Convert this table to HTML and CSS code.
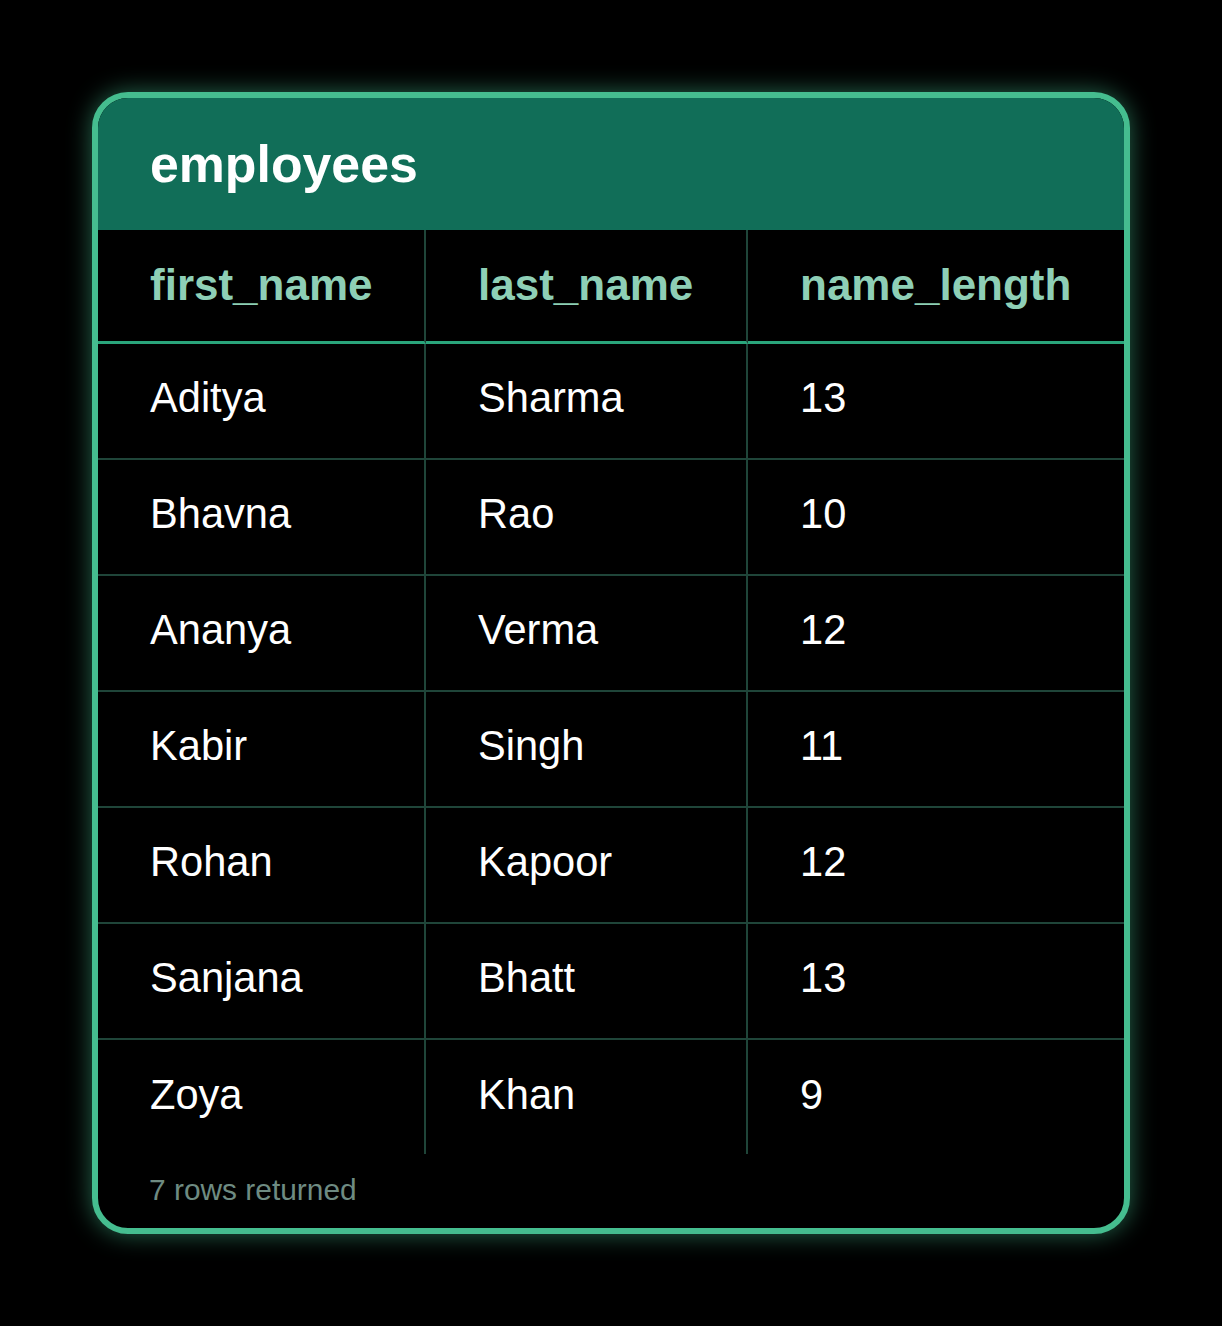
FILE: index.html
```html
<!DOCTYPE html>
<html lang="en">
<head>
<meta charset="utf-8">
<title>employees</title>
<link rel="stylesheet" href="styles.css">
</head>
<body>
<div class="card">
  <div class="card-title">employees</div>
  <div class="grid">
    <div class="cell head">first_name</div>
    <div class="cell head">last_name</div>
    <div class="cell head last-col">name_length</div>

    <div class="cell">Aditya</div>
    <div class="cell">Sharma</div>
    <div class="cell last-col">13</div>

    <div class="cell">Bhavna</div>
    <div class="cell">Rao</div>
    <div class="cell last-col">10</div>

    <div class="cell">Ananya</div>
    <div class="cell">Verma</div>
    <div class="cell last-col">12</div>

    <div class="cell">Kabir</div>
    <div class="cell">Singh</div>
    <div class="cell last-col">11</div>

    <div class="cell">Rohan</div>
    <div class="cell">Kapoor</div>
    <div class="cell last-col">12</div>

    <div class="cell">Sanjana</div>
    <div class="cell">Bhatt</div>
    <div class="cell last-col">13</div>

    <div class="cell last-row">Zoya</div>
    <div class="cell last-row">Khan</div>
    <div class="cell last-row last-col">9</div>
  </div>
  <div class="footer">7 rows returned</div>
</div>
</body>
</html>
```

FILE: styles.css
```css
* { box-sizing: border-box; }

html, body {
  margin: 0;
  background: #000;
}

body {
  padding: 92px;
  font-family: "Liberation Sans", Arial, sans-serif;
  color: #fff;
}

.card {
  width: 1038px;
  border: 6px solid #45bd8f;
  border-radius: 36px;
  background: #000;
  overflow: hidden;
  box-shadow: 0 0 24px rgba(69, 189, 143, 0.55);
}

.card-title {
  height: 132px;
  background: #116e58;
  display: flex;
  align-items: center;
  padding-left: 52px;
  font-size: 51.8px;
  font-weight: 700;
  color: #fff;
}

.grid {
  display: grid;
  grid-template-columns: 328px 322px 376px;
}

.cell {
  height: 116px;
  display: flex;
  align-items: center;
  padding-left: 52px;
  padding-bottom: 6px;
  font-size: 41.6px;
  color: #fff;
  border-right: 2px solid #1f4539;
  border-bottom: 2px solid #1f4539;
}

.cell.head {
  height: 114px;
  padding-bottom: 2px;
  font-size: 44px;
  font-weight: 700;
  color: #8ecfb6;
  border-bottom: 3px solid #2aa57b;
}

.cell.last-col { border-right: none; }

.cell.last-row {
  height: 114px;
  padding-bottom: 4px;
  border-bottom: none;
}

.footer {
  height: 74px;
  display: flex;
  align-items: center;
  padding-left: 51px;
  padding-bottom: 2px;
  font-size: 29.9px;
  color: #6e8b82;
}
```
